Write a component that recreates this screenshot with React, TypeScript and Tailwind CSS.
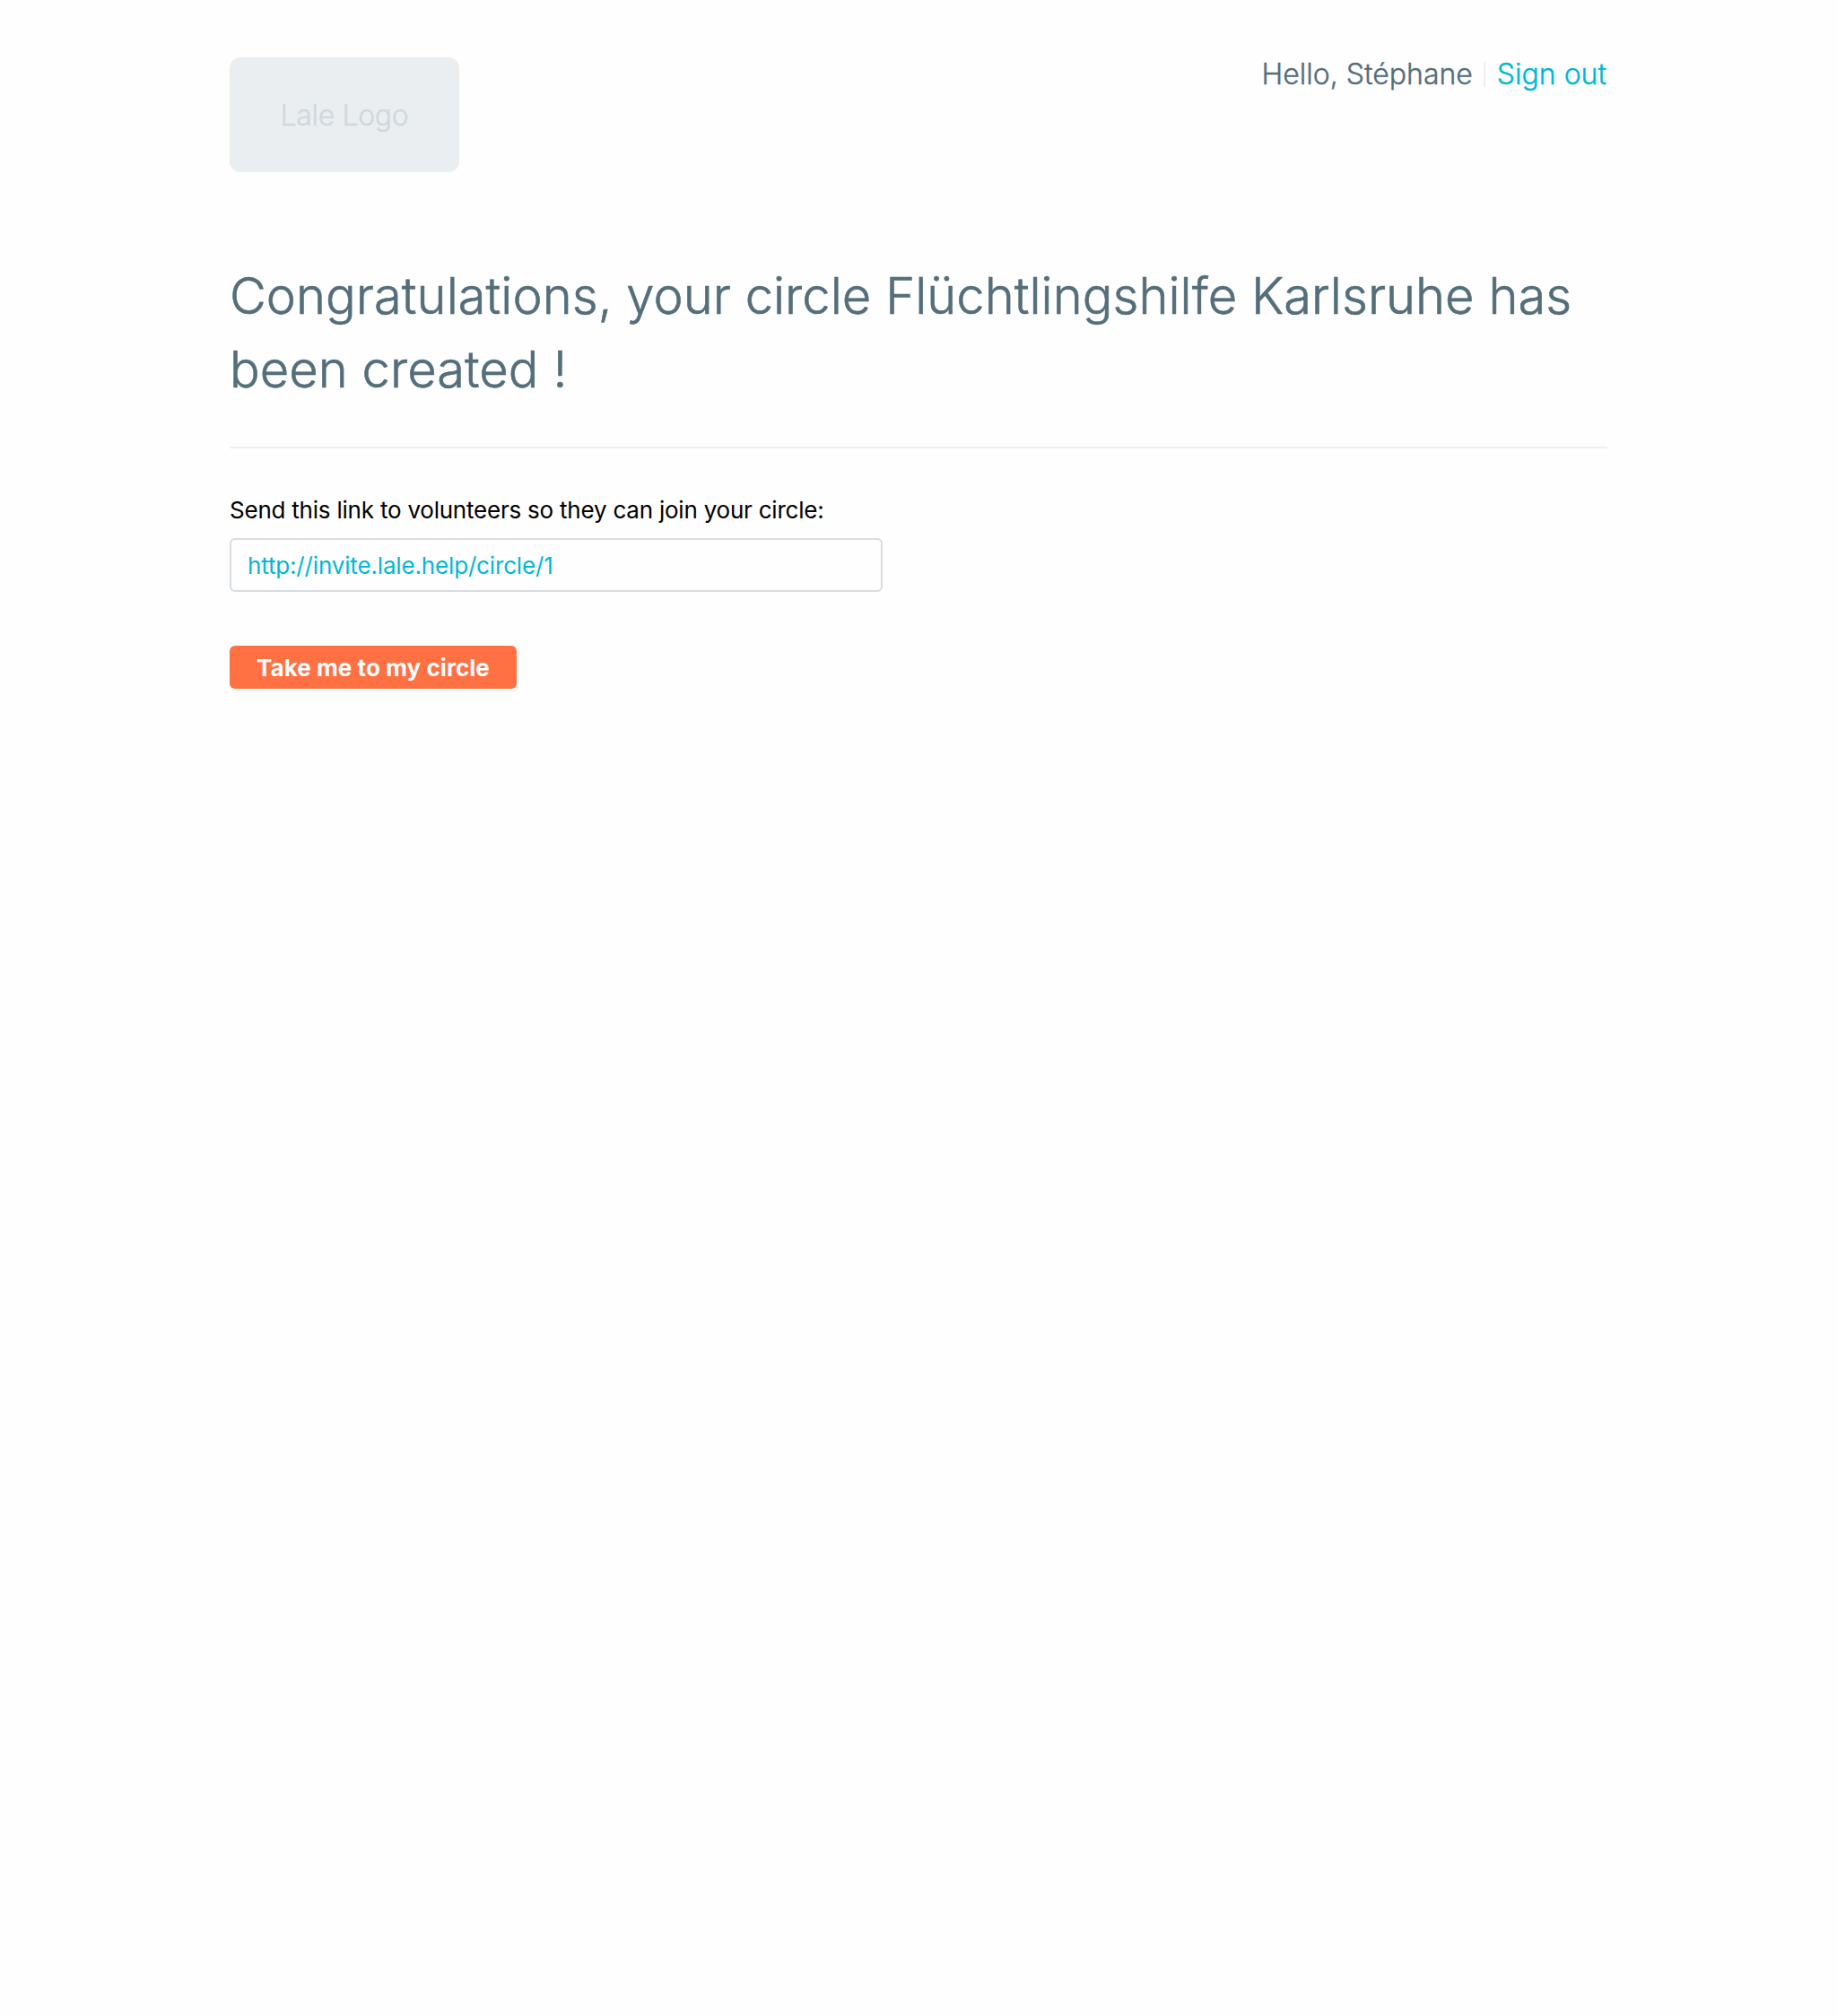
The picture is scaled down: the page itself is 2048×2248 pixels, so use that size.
export default function App() {
  return (
    <div className="min-h-[2248px] bg-[#fefefe] font-['Inter',sans-serif]">
      <div className="mx-auto w-[1536px] pt-16">
        <header className="flex items-start justify-between">
          <div className="flex h-32 w-64 items-center justify-center rounded-xl bg-[#eaeef1] pt-[2px] text-[32px] leading-10 font-light tracking-[-0.35px] text-[#cfd8dc] [-webkit-text-stroke:0.4px]">
            <span>Lale Logo</span>
          </div>
          <nav className="-mt-px flex items-center pr-px text-[32px] leading-10 font-light whitespace-nowrap [-webkit-text-stroke:0.4px]">
            <span className="text-[#546e7a]">Hello, Stéphane</span>
            <span className="mr-[13px] ml-3 h-7 w-[2px] bg-[#eceff1]" />
            <a className="text-[#00b8d4]">Sign out</a>
          </nav>
        </header>
        <main>
          <h1 className="mt-[97px] border-b-2 border-[#eceff1] pb-[45px] text-[56px] leading-[82px] font-light tracking-[0.05px] text-[#546e7a] [-webkit-text-stroke:0.6px]">
            <span className="block whitespace-nowrap">Congratulations, your circle Flüchtlingshilfe Karlsruhe has</span>
            <span className="block whitespace-nowrap">been created !</span>
          </h1>
          <p className="mt-[49px] text-[26px] leading-10 tracking-[-0.22px] whitespace-nowrap text-black">
            <span>Send this link to volunteers so they can join your circle:</span>
          </p>
          <div className="mt-[11px] flex h-[60px] w-[728px] items-center rounded-md border-2 border-[#d6dce0] px-[18px] pt-[2px] text-[26px] leading-10 tracking-[-0.16px] text-[#00b8d4]">
            <span>http://invite.lale.help/circle/1</span>
          </div>
          <button className="mt-[60px] flex h-12 w-80 items-center justify-center rounded-md bg-[#ff7043] pt-[2px] text-[26px] leading-10 font-bold tracking-[0.06px] whitespace-nowrap text-[#fefefe]">
            <span>Take me to my circle</span>
          </button>
        </main>
      </div>
    </div>
  );
}
